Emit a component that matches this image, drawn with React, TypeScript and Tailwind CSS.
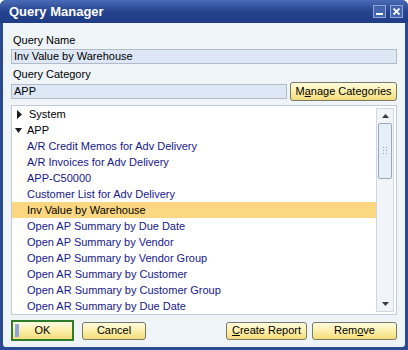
const items = [
  'A/R Credit Memos for Adv Delivery',
  'A/R Invoices for Adv Delivery',
  'APP-C50000',
  'Customer List for Adv Delivery',
  'Inv Value by Warehouse',
  'Open AP Summary by Due Date',
  'Open AP Summary by Vendor',
  'Open AP Summary by Vendor Group',
  'Open AR Summary by Customer',
  'Open AR Summary by Customer Group',
  'Open AR Summary by Due Date',
];

function SapButton({ children, className = '' }: { children: React.ReactNode; className?: string }) {
  return (
    <div
      className={`flex items-center justify-center rounded-[3px] border border-[#7a7a62] bg-gradient-to-b from-[#fffbe0] via-[#fcefa8] to-[#f3dc7c] text-[11px] text-black ${className}`}
    >
      {children}
    </div>
  );
}

export default function App() {
  return (
    <div className="flex h-[350px] w-[408px] flex-col overflow-hidden rounded-t-[6px] bg-[#2a4a92] font-['Liberation_Sans',Arial,sans-serif]">
      {/* Title bar */}
      <div className="flex h-[23px] items-center justify-between bg-gradient-to-b from-[#4a6cb8] via-[#26438f] to-[#1f3c86] pl-[9px] pr-[5px]">
        <span className="text-[13px] font-bold text-white">Query Manager</span>
        <div className="flex gap-[4px]">
          <div className="flex h-[13px] w-[13px] items-end justify-center border border-[#8fa6d6] bg-[#4464ae] pb-[2px]">
            <div className="h-[2px] w-[7px] bg-white" />
          </div>
          <div className="flex h-[13px] w-[13px] items-center justify-center border border-[#8fa6d6] bg-[#4464ae]">
            <svg width="7" height="7" viewBox="0 0 7 7">
              <path d="M0.5 0.5L6.5 6.5M6.5 0.5L0.5 6.5" stroke="white" strokeWidth="1.8" />
            </svg>
          </div>
        </div>
      </div>

      {/* Body */}
      <div className="mx-[3px] mb-[3px] flex flex-1 flex-col rounded-b-[3px] bg-[#eef4f7] px-[8px] pt-[9px] text-[11px] text-black">
        <div className="pl-[2px] leading-[16px]">Query Name</div>
        <div className="mt-[1px] flex h-[15px] items-center border border-[#b3bcc6] bg-[#dde7f5] pl-[2px]">
          Inv Value by Warehouse
        </div>
        <div className="mt-[2px] pl-[2px] leading-[16px]">Query Category</div>
        <div className="flex items-center gap-[3px]">
          <div className="flex h-[15px] flex-1 items-center border border-[#b3bcc6] bg-[#dde7f5] pl-[2px]">APP</div>
          <SapButton className="h-[19px] w-[107px]">
            <span>
              M<span className="underline">a</span>nage Categories
            </span>
          </SapButton>
        </div>

        {/* Tree list */}
        <div className="mt-[4px] flex h-[210px] overflow-hidden border border-[#c3ccd6] bg-white">
          <div className="flex-1">
            <div className="flex h-[16px] items-center gap-[6px] pl-[5px]">
              <svg width="5" height="9" viewBox="0 0 5 9">
                <path d="M0 0L5 4.5L0 9Z" fill="#1a1a1a" />
              </svg>
              <span className="pl-[1px]">System</span>
            </div>
            <div className="flex h-[16px] items-center gap-[5px] pl-[3px]">
              <svg width="7" height="5" viewBox="0 0 7 5">
                <path d="M0 0L7 0L3.5 5Z" fill="#1a1a1a" />
              </svg>
              <span>APP</span>
            </div>
            {items.map((it) => (
              <div
                key={it}
                className={`flex h-[16px] items-center pl-[15px] ${
                  it === 'Inv Value by Warehouse' ? 'bg-[#fcd782] text-black' : 'text-[#17178c]'
                }`}
              >
                {it}
              </div>
            ))}
          </div>

          {/* Scrollbar */}
          <div className="my-[2px] mr-[2px] flex w-[18px] flex-col items-center border border-[#cfd8e2] bg-[#f1f5f9]">
            <div className="flex h-[14px] items-center justify-center">
              <svg width="7" height="4" viewBox="0 0 7 4">
                <path d="M0 4L3.5 0L7 4Z" fill="#3a3a46" />
              </svg>
            </div>
            <div className="flex h-[56px] w-[14px] items-center justify-center rounded-[2px] border border-[#9aa8ba] bg-[#e6eef8]">
              <svg width="5" height="9" viewBox="0 0 5 9">
                <g fill="#8c9aac">
                  <rect x="0" y="0" width="1" height="1" />
                  <rect x="3" y="0" width="1" height="1" />
                  <rect x="0" y="3" width="1" height="1" />
                  <rect x="3" y="3" width="1" height="1" />
                  <rect x="0" y="6" width="1" height="1" />
                  <rect x="3" y="6" width="1" height="1" />
                </g>
              </svg>
            </div>
            <div className="flex-1" />
            <div className="flex h-[14px] items-center justify-center">
              <svg width="7" height="4" viewBox="0 0 7 4">
                <path d="M0 0L3.5 4L7 0Z" fill="#3a3a46" />
              </svg>
            </div>
          </div>
        </div>

        {/* Bottom buttons */}
        <div className="mt-[5px] flex items-center">
          <div className="border-2 border-[#2f7d2a]">
            <div className="relative w-[59px]">
              <SapButton className="h-[17px] w-[59px] rounded-none border-0">OK</SapButton>
              <div className="absolute left-[2px] top-[2px] h-[13px] w-[4px] bg-[#8ea6e0]" />
            </div>
          </div>
          <SapButton className="ml-[8px] h-[18px] w-[64px]">Cancel</SapButton>
          <div className="flex-1" />
          <SapButton className="h-[18px] w-[81px]">
            <span>
              <span className="underline">C</span>reate Report
            </span>
          </SapButton>
          <SapButton className="ml-[5px] h-[18px] w-[85px]">
            <span>
              Rem<span className="underline">o</span>ve
            </span>
          </SapButton>
        </div>
      </div>
    </div>
  );
}
